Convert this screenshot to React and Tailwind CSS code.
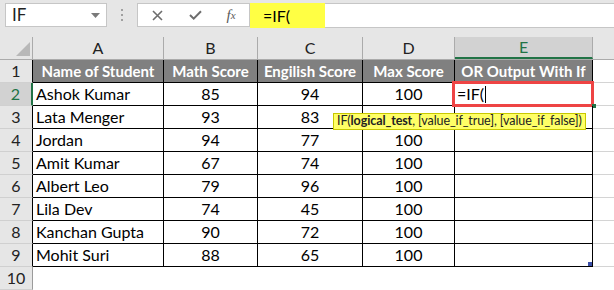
import React from "react";

const rows = [
  ["Ashok Kumar", 85, 94, 100],
  ["Lata Menger", 93, 83, ""],
  ["Jordan", 94, 77, 100],
  ["Amit Kumar", 67, 74, 100],
  ["Albert Leo", 79, 96, 100],
  ["Lila Dev", 74, 45, 100],
  ["Kanchan Gupta", 90, 72, 100],
  ["Mohit Suri", 88, 65, 100],
];

function RowHead({ n, active, dark }) {
  return (
    <div
      className={
        "w-[33px] shrink-0 h-full flex items-center justify-center text-[16px] border-b border-b-[#d0d0d0] border-r " +
        (active
          ? "bg-[#d2d2d2] text-[#217346] border-r-2 border-r-[#217346]"
          : dark
          ? "bg-[#e6e6e6] text-[#222] border-r-black"
          : "bg-[#e6e6e6] text-[#222] border-r-[#9b9b9b]")
      }
    >
      {n}
    </div>
  );
}

const cell = "shrink-0 border-r border-b border-black flex items-end pb-[1px] leading-[20px]";

export default function App() {
  return (
    <div
      className="w-[614px] h-[290px] overflow-hidden bg-white relative text-black"
      style={{ fontFamily: "Lato, 'Open Sans', sans-serif" }}
    >
      {/* formula bar */}
      <div className="h-[37px] bg-[#e6e6e6] flex items-start pt-[3px]">
        <div className="ml-[5px] w-[102px] h-[24px] bg-white border border-[#c6c6c6] flex items-center justify-between pl-[6px] pr-[6px]">
          <span className="text-[17px] text-[#222]">IF</span>
          <svg width="9" height="5" viewBox="0 0 9 5">
            <path d="M0 0 L9 0 L4.5 5 Z" fill="#7a7a7a" />
          </svg>
        </div>
        <div className="w-[30px] h-[24px] flex flex-col items-center justify-center gap-[3px]">
          <div className="w-[2px] h-[2px] bg-[#a0a0a0]" />
          <div className="w-[2px] h-[2px] bg-[#a0a0a0]" />
          <div className="w-[2px] h-[2px] bg-[#a0a0a0]" />
        </div>
        <div className="w-[113px] h-[24px] bg-white border border-[#c6c6c6] flex items-center">
          <div className="w-[38px] flex justify-center">
            <svg width="11" height="11" viewBox="0 0 11 11">
              <path d="M1 1 L10 10 M10 1 L1 10" stroke="#6d6d6d" strokeWidth="1.6" />
            </svg>
          </div>
          <div className="w-[38px] flex justify-center">
            <svg width="13" height="10" viewBox="0 0 13 10">
              <path d="M1 5 L4.7 8.6 L12 1.2" stroke="#6d6d6d" strokeWidth="2" fill="none" />
            </svg>
          </div>
          <div
            className="w-[34px] flex justify-center text-[15px] italic text-[#5a5a5a]"
            style={{ fontFamily: "'Liberation Serif', serif" }}
          >
            f<span className="text-[11px] mt-[3px]">x</span>
          </div>
        </div>
        <div className="flex-1 h-[25px] bg-white border-t border-b border-[#c6c6c6] flex">
          <div className="w-[75px] h-[25px] -mt-px bg-[#ffff44] flex items-center pl-[13px] text-[16px]">
            =IF(
          </div>
        </div>
      </div>

      {/* column headers */}
      <div className="h-[23px] flex bg-[#e6e6e6] border-b border-[#ababab] text-[16px] text-[#222]">
        <div className="w-[33px] shrink-0 h-full border-r border-[#ababab] relative">
          <svg className="absolute right-[2px] bottom-[3px]" width="14" height="14" viewBox="0 0 14 14">
            <path d="M14 0 L14 14 L0 14 Z" fill="#b8b8b8" />
          </svg>
        </div>
        <div className="w-[131px] shrink-0 border-r border-[#ababab] flex items-center justify-center">A</div>
        <div className="w-[94px] shrink-0 border-r border-[#ababab] flex items-center justify-center">B</div>
        <div className="w-[105px] shrink-0 border-r border-[#ababab] flex items-center justify-center">C</div>
        <div className="w-[92px] shrink-0 border-r border-[#ababab] flex items-center justify-center">D</div>
        <div className="w-[138px] shrink-0 bg-[#d2d2d2] text-[#217346] border-b-2 border-[#217346] border-r border-r-[#ababab] flex items-center justify-center">
          E
        </div>
        <div className="flex-1" />
      </div>

      {/* row 1 header */}
      <div className="h-[23px] flex text-[15px]">
        <RowHead n={1} dark />
        <div className="w-[131px] shrink-0 bg-[#808080] text-white font-bold border-r border-b border-black flex items-center justify-center">
          Name of Student
        </div>
        <div className="w-[94px] shrink-0 bg-[#808080] text-white font-bold border-r border-b border-black flex items-center justify-center">
          Math Score
        </div>
        <div className="w-[105px] shrink-0 bg-[#808080] text-white font-bold border-r border-b border-black flex items-center justify-center">
          Engilish Score
        </div>
        <div className="w-[92px] shrink-0 bg-[#808080] text-white font-bold border-r border-b border-black flex items-center justify-center">
          Max Score
        </div>
        <div className="w-[138px] shrink-0 bg-[#808080] text-white font-bold border-r border-b border-black flex items-center justify-center">
          OR Output With If
        </div>
        <div className="flex-1 border-b border-[#d4d4d4]" />
      </div>

      {rows.map((r, i) => (
        <div key={i} className="h-[23px] flex text-[16px]">
          <RowHead n={i + 2} active={i === 0} dark />
          <div className={"w-[131px] pl-[3px] " + cell}>{r[0]}</div>
          <div className={"w-[94px] justify-center " + cell}>{r[1]}</div>
          <div className={"w-[105px] justify-center " + cell}>{r[2]}</div>
          <div className={"w-[92px] justify-center " + cell}>{r[3]}</div>
          <div className={"w-[138px] pl-[2px] relative " + cell}>
            {i === 0 && (
              <>
                <span>=IF(</span>
                <span className="w-px h-[17px] mb-[1px] bg-black ml-[1px]" />
                <div className="absolute left-[-3px] top-[-2px] w-[142px] h-[26px] border-[3px] border-[#ee4444]" />
                <div className="absolute right-[-4px] bottom-[-3px] w-[4px] h-[4px] bg-[#217346]" />
              </>
            )}
            {i === rows.length - 1 && (
              <div className="absolute right-0 bottom-0 w-[4px] h-[4px] bg-[#3b4fa8]" />
            )}
          </div>
          <div className="flex-1 border-b border-[#d4d4d4]" />
        </div>
      ))}

      <div className="h-[23px] flex text-[16px]">
        <RowHead n={10} />
        <div className="flex-1" />
      </div>

      {/* tooltip */}
      <div className="absolute left-[333px] top-[113px] h-[17px] px-[3px] bg-[#ffff66] border border-[#c8c800] flex items-center text-[12.5px] tracking-[-0.1px] text-[#222] whitespace-nowrap">
        IF(<span className="font-bold">logical_test</span>, [value_if_true], [value_if_false])
      </div>
    </div>
  );
}
